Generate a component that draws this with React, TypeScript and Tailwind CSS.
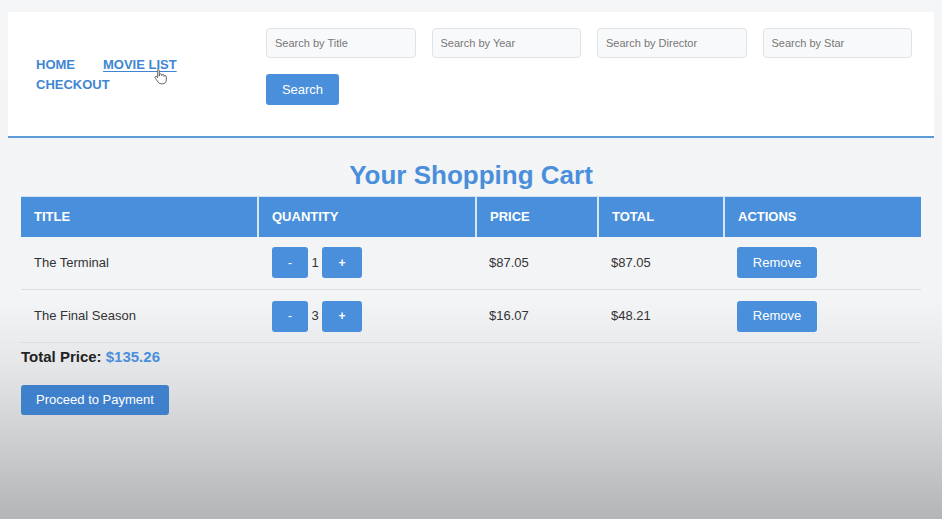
import React from "react";

const items = [
  { title: "The Terminal", qty: 1, price: "$87.05", total: "$87.05" },
  { title: "The Final Season", qty: 3, price: "$16.07", total: "$48.21" },
];

export default function App() {
  return (
    <div
      className="w-[942px] h-[519px] overflow-hidden bg-[linear-gradient(180deg,#f4f5f7_0%,#f3f4f6_58%,#e3e4e6_72%,#cdcecf_85%,#b4b5b7_100%)] pt-[12px]"
      style={{ fontFamily: '"Liberation Sans", Arial, sans-serif' }}
    >
      <header className="mx-[8px] h-[126px] bg-white border-b-2 border-[#5a9bd8] flex">
        <nav className="relative w-[258px] pl-[28px] pt-[43px] text-[13px] font-bold text-[#3f86d3] leading-[20px]">
          <div className="flex gap-[28px]">
            <span>HOME</span>
            <span className="underline underline-offset-2">MOVIE LIST</span>
          </div>
          <div>CHECKOUT</div>
          <svg className="absolute left-[146px] top-[56px]" width="14" height="17" viewBox="0 0 14 17">
            <path
              d="M4 1.5c.8 0 1.3.6 1.3 1.3V8l.1-1.1c0-.7.6-1.1 1.2-1.1s1.2.5 1.2 1.1v.6c.1-.6.6-1 1.2-1s1.1.5 1.1 1.1v.8c.1-.5.6-.9 1.1-.9.6 0 1.1.5 1.1 1.1V12c0 2.2-1.6 3.8-3.8 3.8H7.2c-1.2 0-2.1-.5-2.8-1.4L1.2 10.2c-.4-.5-.3-1.2.2-1.6.5-.4 1.2-.3 1.6.2l.7.9V2.8C3.7 2.1 3.3 1.5 4 1.5z"
              fill="#fff"
              stroke="#555"
              strokeWidth="0.9"
            />
          </svg>
        </nav>
        <div className="pt-[16px]">
          <div className="flex gap-[16px]">
            {["Search by Title", "Search by Year", "Search by Director", "Search by Star"].map((p) => (
              <input
                key={p}
                placeholder={p}
                className="w-[149.5px] h-[30px] rounded-[4px] border border-[#dfe2e6] bg-[#f8f9fa] px-[8px] text-[11px] text-[#444] placeholder:text-[#777] outline-none"
              />
            ))}
          </div>
          <button className="mt-[16px] w-[73px] h-[31px] rounded-[3px] bg-[#4a8fdb] text-white text-[13px]">
            Search
          </button>
        </div>
      </header>

      <main className="px-[21px] pt-[22px]">
        <h1 className="text-center text-[26px] leading-[30px] font-bold text-[#4a8fdb]">
          Your Shopping Cart
        </h1>
        <table className="mt-[6px] w-[900px] border-collapse text-[13px] text-[#333]">
          <thead>
            <tr className="h-[40px] bg-[#4a8fdb] text-white text-left font-bold">
              <th className="w-[237px] pl-[13px] border-r-2 border-[#d6e6f6] border-t border-t-[#cfe0f3]">TITLE</th>
              <th className="w-[218px] pl-[13px] border-r-2 border-[#d6e6f6] border-t border-t-[#cfe0f3]">QUANTITY</th>
              <th className="w-[122px] pl-[13px] border-r-2 border-[#d6e6f6] border-t border-t-[#cfe0f3]">PRICE</th>
              <th className="w-[126px] pl-[13px] border-r-2 border-[#d6e6f6] border-t border-t-[#cfe0f3]">TOTAL</th>
              <th className="pl-[13px] border-t border-t-[#cfe0f3]">ACTIONS</th>
            </tr>
          </thead>
          <tbody>
            {items.map((it) => (
              <tr key={it.title} className="h-[53px] border-b border-[#dcdde0]">
                <td className="pl-[13px]">{it.title}</td>
                <td className="pl-[14px]">
                  <div className="flex items-center">
                    <button className="w-[36px] h-[31px] rounded-[3px] bg-[#4a8fdb] text-white text-[12px]">-</button>
                    <span className="w-[14px] text-center text-[13px]">{it.qty}</span>
                    <button className="w-[40px] h-[31px] rounded-[3px] bg-[#4a8fdb] text-white text-[12px] font-bold">+</button>
                  </div>
                </td>
                <td className="pl-[13px]">{it.price}</td>
                <td className="pl-[13px]">{it.total}</td>
                <td className="pl-[13px]">
                  <button className="w-[80px] h-[31px] rounded-[3px] bg-[#4a8fdb] text-white text-[13px]">Remove</button>
                </td>
              </tr>
            ))}
          </tbody>
        </table>
        <div className="mt-[4px] text-[15px] font-bold text-[#222] leading-[20px]">
          Total Price: <span className="text-[#4a8fdb]">$135.26</span>
        </div>
        <button className="mt-[18px] w-[148px] h-[30px] rounded-[3px] bg-[#3f80cc] text-white text-[13px]">
          Proceed to Payment
        </button>
      </main>
    </div>
  );
}
